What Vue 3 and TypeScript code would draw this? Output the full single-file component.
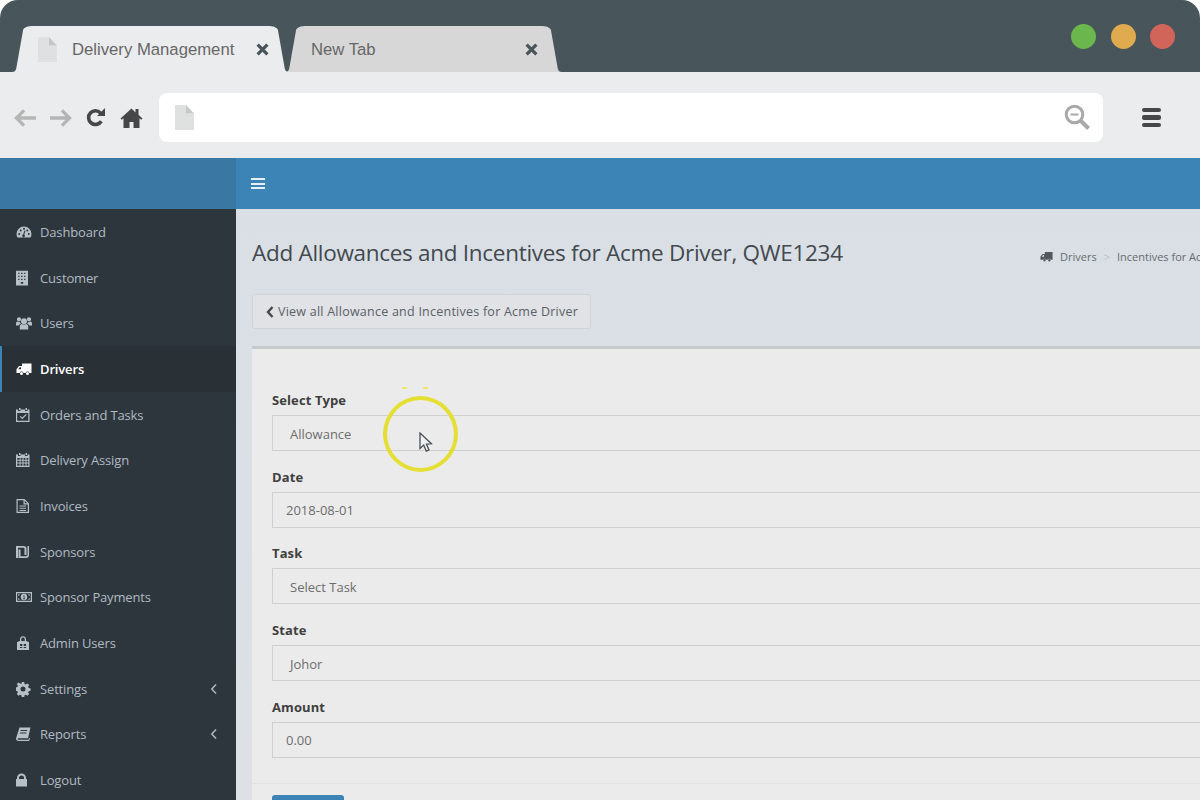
<script setup lang="ts">
/* Browser mockup framing the delivery admin "add allowance" form. */
interface NavItem {
  label: string
  icon: string
  active?: boolean
  caret?: boolean
}

const icons: Record<string, string> = {
  dashboard:
    'M8 2.500A7.500 7.500 0 0 0 .5 10c0 1.300.3 2.400.9 3.500h13.200c.6-1.100.9-2.200.9-3.500A7.500 7.500 0 0 0 8 2.500ZM3.200 11a1 1 0 1 1 0-2 1 1 0 0 1 0 2Zm1.500-3.600a1 1 0 1 1 0-2 1 1 0 0 1 0 2ZM8 5.700a1 1 0 1 1 0-2 1 1 0 0 1 0 2Zm1 6a1.400 1.400 0 1 1-1.800-1.300l1.200-3.900 1 .3-1.200 3.900c.5.200.8.600.8 1Zm2.300-4.300a1 1 0 1 1 0-2 1 1 0 0 1 0 2Zm1.500 3.600a1 1 0 1 1 0-2 1 1 0 0 1 0 2Z',
  building:
    'M0 .8h12v14.700H0Zm2.200 2h1.300v1.300H2.200Zm2.900 0h1.400v1.300H5.100Zm3 0h1.300v1.300H8.100Zm-5.900 3h1.300v1.300H2.200Zm2.900 0h1.400v1.300H5.100Zm3 0h1.300v1.300H8.100Zm-5.900 3h1.300v1.300H2.200Zm2.900 0h1.400v1.300H5.100Zm3 0h1.300v1.300H8.100ZM4.800 12h2.400v1.800H4.800Z',
  users:
    'M8 3.200a3 3 0 1 1 0 6 3 3 0 0 1 0-6ZM3 2.200a2.100 2.100 0 1 1 0 4.200 2.100 2.100 0 0 1 0-4.200Zm10 0a2.100 2.100 0 1 1 0 4.200 2.100 2.100 0 0 1 0-4.200ZM3.800 14.500v-3c0-1.500.9-2.300 2.200-2.500.6.500 1.300.8 2 .8s1.400-.3 2-.8c1.300.2 2.200 1 2.200 2.500v3H3.800ZM0 10.500v-2C0 7.300.7 6.700 1.500 6.500c.4.400 1 .7 1.700.7.300 0 .6 0 .8-.1 0 .7.300 1.300.8 1.700-1 .3-1.800 1-2 1.700H0Zm16 0h-2.800c-.2-.7-1-1.400-2-1.700.5-.4.800-1 .8-1.700.2.100.5.100.8.100.7 0 1.300-.3 1.700-.7.800.2 1.500.8 1.500 2v2Z',
  truck:
    'M6 2.500h9.500v9.500h-2.100a2 2 0 0 0-3.800 0H7.400a2 2 0 0 0-3.800 0H.5V8.200L3 5h3V2.500ZM2.200 8.200H5V6.200H3.700l-1.500 2ZM5.500 11a1.500 1.500 0 1 1 0 3 1.500 1.500 0 0 1 0-3Zm6 0a1.500 1.500 0 1 1 0 3 1.500 1.500 0 0 1 0-3Z',
  check:
    'M3 1h1.500v2H3V1Zm6.500 0H11v2H9.500V1ZM0 2.500h2V4h2.500V2.500H9V4h2.500V2.500h2V15H0V2.500ZM1.200 6v7.800h11.100V6H1.200Zm2.600 3.700.8-.8 1.700 1.700 3.600-3.600.8.800-4.400 4.400-2.500-2.500Z',
  calendar:
    'M3 1h1.500v2H3V1Zm6.500 0H11v2H9.500V1ZM0 2.500h2V4h2.500V2.500H9V4h2.500V2.500h2V15H0V2.500ZM1.200 6v1.800h2.400V6H1.200Zm3.300 0v1.800h2V6h-2Zm3 0v1.800h2V6h-2Zm3 0v1.800h1.800V6h-1.800ZM1.200 8.700v1.800h2.400V8.700H1.200Zm3.300 0v1.800h2V8.700h-2Zm3 0v1.800h2V8.700h-2Zm3 0v1.800h1.800V8.700h-1.800ZM1.200 11.400v2.400h2.400v-2.400H1.200Zm3.300 0v2.400h2v-2.400h-2Zm3 0v2.400h2v-2.400h-2Zm3 0v2.400h1.800v-2.400h-1.800Z',
  file:
    'M.5 1h8l4.500 4.500V15H.5V1Zm1.200 1.200v11.600h10.100V6.500H7.500V2.200H1.700Zm7 .5v2.600h2.600L8.700 2.700ZM3.500 7.500H10v1H3.500v-1Zm0 2.200H10v1H3.500v-1Zm0 2.200H10v1H3.500v-1Z',
  sheqel:
    'M0 2h7.500c2 0 3 1.300 3 3v6h-2V5c0-.7-.4-1.200-1-1.200H2V14H0V2Zm11.500 0H13v9c0 2-1.200 3-3 3H2.500V5.500h2v6.700H10c.8 0 1.500-.4 1.500-1.200V2Z',
  money:
    'M0 3h16v10H0V3Zm1.200 1.200v7.600h13.600V4.200H1.200ZM8 4.800a3.200 3.200 0 1 1 0 6.400 3.200 3.200 0 0 1 0-6.400ZM7.200 6.500v.8h.5v2.200h-.6v.8h2v-.8h-.6V6.500H7.200ZM2.200 5.200h1.500c0 .8-.7 1.500-1.500 1.500V5.200Zm10 0h1.500v1.500c-.8 0-1.500-.7-1.500-1.500ZM2.200 9.300c.8 0 1.500.7 1.500 1.500H2.200V9.300Zm11.500 0v1.500h-1.500c0-.8.700-1.500 1.500-1.500Z',
  admin:
    'M4 6V4.200C4 2.500 5.300 1.200 7 1.200s3 1.300 3 3V6h1.500v1H13v8H1V7h1.500V6H4Zm1.300 0h3.400V4.200C8.700 3.200 8 2.500 7 2.500s-1.700.700-1.700 1.700V6ZM4 9v2h2.300V9H4Zm3.700 0v2H10V9H7.700Zm-3.700 3v1h2.300v-1H4Zm3.700 0v1H10v-1H7.700Z',
  cog:
    'M5.800 1h2.400l.4 2 1.200.5 1.700-1.100 1.700 1.700-1.100 1.700.5 1.200 2 .4v2.400l-2 .4-.5 1.200 1.100 1.700-1.700 1.700-1.700-1.100-1.200.5-.4 2H5.800l-.4-2-1.200-.5-1.700 1.100-1.700-1.700 1.100-1.700-.5-1.200-1.500-.4V6.400l1.500-.4.5-1.200-1.100-1.700 1.700-1.700 1.700 1.100L5.400 3l.4-2ZM7 5.500a2.500 2.500 0 1 0 0 5 2.500 2.500 0 0 0 0-5Z',
  book:
    'M3.500 1.500h11L12 12.300H2.500c-.6 0-1 .3-1 .8s.4.700 1 .700h10l.4-1.600 1.300-.4L13 15H2.500C1 15 0 14.100 0 12.800c0-.4 0-.7.2-1.100L3.500 1.500Zm1.300 2.500-.3 1H11l.3-1H4.800Zm-.7 2.500-.3 1h6.500l.3-1H4.100Z',
  lock:
    'M1 7V6a4.500 4.500 0 0 1 9 0v1h1v7.500H0V7h1Zm2 0h5V6a2.500 2.500 0 0 0-5 0v1Z'
}

const navItems: NavItem[] = [
  { label: 'Dashboard', icon: 'dashboard' },
  { label: 'Customer', icon: 'building' },
  { label: 'Users', icon: 'users' },
  { label: 'Drivers', icon: 'truck', active: true },
  { label: 'Orders and Tasks', icon: 'check' },
  { label: 'Delivery Assign', icon: 'calendar' },
  { label: 'Invoices', icon: 'file' },
  { label: 'Sponsors', icon: 'sheqel' },
  { label: 'Sponsor Payments', icon: 'money' },
  { label: 'Admin Users', icon: 'admin' },
  { label: 'Settings', icon: 'cog', caret: true },
  { label: 'Reports', icon: 'book', caret: true },
  { label: 'Logout', icon: 'lock' }
]

const fields = [
  { label: 'Select Type', value: 'Allowance', select: true },
  { label: 'Date', value: '2018-08-01', select: false },
  { label: 'Task', value: 'Select Task', select: true },
  { label: 'State', value: 'Johor', select: true },
  { label: 'Amount', value: '0.00', select: false }
]

const tabs = [
  { title: 'Delivery Management', active: true },
  { title: 'New Tab', active: false }
]
</script>

<template>
  <div class="window">
    <header class="titlebar">
      <div class="tabs">
        <div v-for="tab in tabs" :key="tab.title" class="tab" :class="{ active: tab.active }">
          <svg class="tab-shape" viewBox="0 0 100 46" preserveAspectRatio="none" aria-hidden="true">
            <path d="M0 46C1 46 1.200 45 1.500 43L4 4C4.300 1.500 5.500 0 8 0H92C94.500 0 95.700 1.500 96 4L98.500 43C98.800 45 99 46 100 46Z" />
          </svg>
          <svg v-if="tab.active" class="doc" viewBox="0 0 19 25" aria-hidden="true">
            <path d="M0 0h11v8.500h8V25H0Z" fill="#dfe0e0" />
            <path d="M11 0l8 8.500h-8Z" fill="#c6c7c7" />
          </svg>
          <span class="tab-title">{{ tab.title }}</span>
          <svg class="tab-close" viewBox="0 0 12 12" aria-hidden="true">
            <path d="M1.500 1.500l9 9m0-9l-9 9" />
          </svg>
        </div>
      </div>
      <div class="lights">
        <i class="light green" />
        <i class="light amber" />
        <i class="light red" />
      </div>
    </header>

    <div class="toolbar">
      <div class="nav-btns">
        <svg class="tb-arrow" viewBox="0 0 24 20" aria-hidden="true">
          <path d="M23 10H3M10.500 2L2.500 10l8 8" fill="none" stroke="#b5b5b5" stroke-width="3.400" />
        </svg>
        <svg class="tb-arrow" viewBox="0 0 24 20" aria-hidden="true">
          <path d="M1 10h20M13.500 2l8 8-8 8" fill="none" stroke="#b5b5b5" stroke-width="3.400" />
        </svg>
        <svg class="tb-reload" viewBox="0 0 18 18" aria-hidden="true">
          <path d="M14.500 12.500A6.500 6.500 0 1 1 14 5" fill="none" stroke="#474747" stroke-width="3.400" />
          <path d="M10.500 7.500H18V0Z" fill="#474747" />
        </svg>
        <svg class="tb-home" viewBox="0 0 22 20" aria-hidden="true">
          <path d="M11 .500L0 10.500l1.300 1.300L3 10.300V20h6v-6h4v6h6v-9.700l1.700 1.500 1.300-1.300-4-3.700V1h-3v3.500Z" fill="#474747" />
        </svg>
      </div>
      <div class="omnibox">
        <svg class="doc" viewBox="0 0 19 25" aria-hidden="true">
          <path d="M0 0h11v8.500h8V25H0Z" fill="#dfe0e0" />
          <path d="M11 0l8 8.500h-8Z" fill="#c6c7c7" />
        </svg>
        <svg class="zoom" viewBox="0 0 27 27" aria-hidden="true">
          <circle cx="10.500" cy="10.500" r="8.300" fill="none" stroke="#a9a9a9" stroke-width="3" />
          <path d="M6.500 10.500h8" stroke="#a9a9a9" stroke-width="2" />
          <path d="M16.500 16.500l8 8" stroke="#a9a9a9" stroke-width="4" />
        </svg>
      </div>
      <div class="menu-btn" aria-hidden="true"><i /><i /><i /></div>
    </div>

    <div class="app">
      <div class="app-top">
        <div class="logo-area" />
        <div class="top-nav">
          <span class="burger" aria-hidden="true"><i /><i /><i /></span>
        </div>
      </div>

      <div class="app-body">
        <aside class="sidebar">
          <a v-for="item in navItems" :key="item.label" class="nav-item" :class="{ active: item.active }">
            <svg class="nav-icon" viewBox="0 0 16 16" aria-hidden="true">
              <path :d="icons[item.icon]" fill-rule="evenodd" />
            </svg>
            <span class="nav-label">{{ item.label }}</span>
            <svg v-if="item.caret" class="caret" viewBox="0 0 8 12" aria-hidden="true">
              <path d="M6 1.500L1.800 6 6 10.500" />
            </svg>
          </a>
        </aside>

        <main class="content">
          <div class="page-head">
            <h1>Add Allowances and Incentives for Acme Driver, QWE1234</h1>
            <div class="crumbs">
              <svg viewBox="0 0 16 16" aria-hidden="true"><path :d="icons.truck" /></svg>
              <span>Drivers</span>
              <span class="sep">&gt;</span>
              <span>Incentives for Acme Driver</span>
            </div>
          </div>

          <button class="back-btn" type="button">
            <svg viewBox="0 0 8 12" aria-hidden="true"><path d="M6.500 1L2 6l4.500 5" /></svg>
            View all Allowance and Incentives for Acme Driver
          </button>

          <section class="box">
            <div class="box-body">
              <div v-for="field in fields" :key="field.label" class="field">
                <label>{{ field.label }}</label>
                <div class="control" :class="{ select: field.select }">{{ field.value }}</div>
              </div>
            </div>
            <div class="box-foot">
              <button class="save" type="button" />
            </div>
          </section>
        </main>
      </div>
    </div>

    <div class="cursor-mark" aria-hidden="true">
      <i class="spark one" />
      <i class="spark two" />
      <svg class="pointer" viewBox="0 0 14 22">
        <path d="M1 1v15.500l3.700-3.400 2.600 6 2.700-1.200-2.600-5.800 5-.3Z" fill="#eef0f2" stroke="#4b5157" stroke-width="1.300" />
      </svg>
    </div>
  </div>
</template>

<style>
html,
body {
  background: #fff;
  margin: 0;
  overflow: hidden;
}
</style>

<style scoped>
.window {
  font-family: "Open Sans", "Noto Sans", sans-serif;
  height: 800px;
  overflow: hidden;
  position: relative;
  width: 1200px;
}

.titlebar {
  align-items: flex-start;
  background: #48555b;
  border-radius: 18px 18px 0 0;
  display: flex;
  height: 72px;
  justify-content: space-between;
}

.tabs {
  display: flex;
  margin: 26px 0 0 12px;
}

.tab {
  align-items: center;
  display: flex;
  font-family: "Liberation Sans", Arial, sans-serif;
  font-size: 16.700px;
  height: 46px;
  position: relative;
  width: 277px;
}

.tab + .tab {
  margin-left: -4px;
  width: 277px;
}

.tab-shape {
  fill: #d7d7d7;
  height: 46px;
  left: 0;
  position: absolute;
  top: 0;
  width: 100%;
}

.tab.active {
  z-index: 1;
}

.tab.active .tab-shape {
  fill: #ebecee;
}

.tab .doc {
  margin-left: 26px;
  position: relative;
}

.doc {
  flex: none;
  height: 25px;
  width: 19px;
}

.tab-title {
  color: #676767;
  margin: 2px 0 0 15px;
  position: relative;
}

.tab + .tab .tab-title {
  margin-left: 26px;
}

.tab-close {
  fill: none;
  height: 13px;
  position: absolute;
  right: 20px;
  stroke: #48555b;
  stroke-width: 3;
  top: 17px;
  width: 13px;
}

.tab + .tab .tab-close {
  right: 24px;
}

.lights {
  display: flex;
  gap: 14.500px;
  margin: 24px 25px 0 0;
}

.light {
  border-radius: 50%;
  height: 25px;
  width: 25px;
}

.green {
  background: #6bb74d;
}

.amber {
  background: #e0aa4e;
}

.red {
  background: #d2655a;
}

.toolbar {
  align-items: center;
  background: #ebecee;
  box-sizing: border-box;
  display: flex;
  height: 86px;
  padding-top: 5px;
}

.nav-btns {
  align-items: center;
  display: flex;
  margin-left: 14px;
  width: 145px;
}

.tb-arrow {
  height: 20px;
  margin-right: 12px;
  width: 23px;
}

.tb-arrow + .tb-arrow {
  margin-right: 14px;
}

.tb-reload {
  height: 19px;
  margin-right: 15px;
  width: 19px;
}

.tb-home {
  height: 20px;
  width: 23px;
}

.omnibox {
  align-items: center;
  background: #fff;
  border-radius: 8px;
  display: flex;
  height: 49px;
  justify-content: space-between;
  padding: 0 12px 0 16px;
  width: 916px;
}

.zoom {
  height: 27px;
  width: 27px;
}

.menu-btn {
  display: flex;
  flex-direction: column;
  gap: 3px;
  margin-left: 39px;
}

.menu-btn i {
  background: #474747;
  border-radius: 2px;
  height: 4.500px;
  width: 19px;
}

.app {
  background: #d9dfe5;
}

.app-top {
  display: flex;
  height: 51px;
}

.logo-area {
  background: #3a78a3;
  width: 236px;
}

.top-nav {
  align-items: center;
  background: #3d84b6;
  display: flex;
  flex: 1;
  padding-left: 15px;
}

.burger {
  display: flex;
  flex-direction: column;
  gap: 2.500px;
}

.burger i {
  background: #e6eff6;
  height: 2px;
  width: 14px;
}

.app-body {
  display: flex;
  height: 591px;
}

.sidebar {
  background: #2e363d;
  flex: none;
  padding-top: 0.400px;
  width: 236px;
}

.nav-item {
  align-items: center;
  border-left: 2px solid transparent;
  color: #b0bac2;
  display: flex;
  font-size: 13px;
  height: 45.650px;
  letter-spacing: -0.150px;
  padding-left: 14px;
  padding-right: 18px;
}

.nav-item.active {
  background: #2a3136;
  border-left-color: #3d84b6;
  color: #fff;
  font-weight: 600;
}

.nav-icon {
  fill: #b7c0c7;
  flex: none;
  height: 16px;
  width: 16px;
}

.active .nav-icon {
  fill: #fff;
}

.nav-label {
  flex: 1;
  margin-left: 8px;
}

.caret {
  fill: none;
  height: 12px;
  stroke: #aab4bc;
  stroke-width: 1.600;
  width: 8px;
}

.content {
  background: linear-gradient(#d9dfe5, #dde1e6);
  flex: none;
  padding: 0 0 0 16px;
  width: 1200px;
}

.page-head {
  align-items: center;
  display: flex;
  height: 85px;
  justify-content: flex-start;
}

h1 {
  color: #43494e;
  font-size: 22.500px;
  font-weight: 400;
  letter-spacing: -0.290px;
  margin: 2px 0 0;
  width: 788px;
}

.crumbs {
  align-items: center;
  color: #666c72;
  display: flex;
  font-size: 11px;
  gap: 7px;
  margin-top: 10px;
  white-space: nowrap;
}

.crumbs svg {
  fill: #54595e;
  height: 13px;
  width: 13px;
}

.sep {
  color: #b8bcc0;
}

.back-btn {
  align-items: center;
  background: #e0e2e5;
  border: 1px solid #d0d4d8;
  border-radius: 3px;
  color: #5a6065;
  display: flex;
  font-family: inherit;
  font-size: 12.500px;
  gap: 4px;
  height: 35px;
  letter-spacing: 0.240px;
  padding: 0 12px 0 13px;
}

.back-btn svg {
  fill: none;
  height: 12px;
  stroke: #43494e;
  stroke-width: 2.400;
  width: 8px;
}

.box {
  background: #ebebeb;
  border-top: 3px solid #c5cacd;
  margin-top: 17px;
  width: 1100px;
}

.box-body {
  padding: 41px 0 0 20px;
}

.field {
  height: 76.700px;
}

.field label {
  color: #3f3f3f;
  display: block;
  font-size: 13px;
  font-weight: 700;
  height: 25px;
  letter-spacing: 0.100px;
  line-height: 20px;
}

.control {
  align-items: center;
  border: 1.500px solid #d0d0d0;
  box-sizing: border-box;
  color: #6d6d6d;
  display: flex;
  font-size: 13px;
  height: 36px;
  padding-left: 13px;
  padding-top: 1px;
}

.control.select {
  padding-left: 17px;
}

.box-foot {
  border-top: 1px solid #e2e2e2;
  margin-top: 9.500px;
  padding: 11px 0 0 20px;
}

.save {
  background: #3d84b6;
  border: 0;
  border-radius: 3px 3px 0 0;
  display: block;
  height: 34px;
  width: 72px;
}

.cursor-mark {
  border: 4px solid #e4df32;
  border-radius: 50%;
  box-sizing: border-box;
  height: 76px;
  left: 383px;
  position: absolute;
  top: 396px;
  width: 75px;
}

.spark {
  background: #ece96a;
  height: 1.500px;
  position: absolute;
  top: -13px;
  width: 5px;
}

.one {
  left: 15px;
}

.two {
  left: 36px;
}

.pointer {
  height: 22px;
  left: 32px;
  position: absolute;
  top: 32px;
  width: 14px;
}
</style>
